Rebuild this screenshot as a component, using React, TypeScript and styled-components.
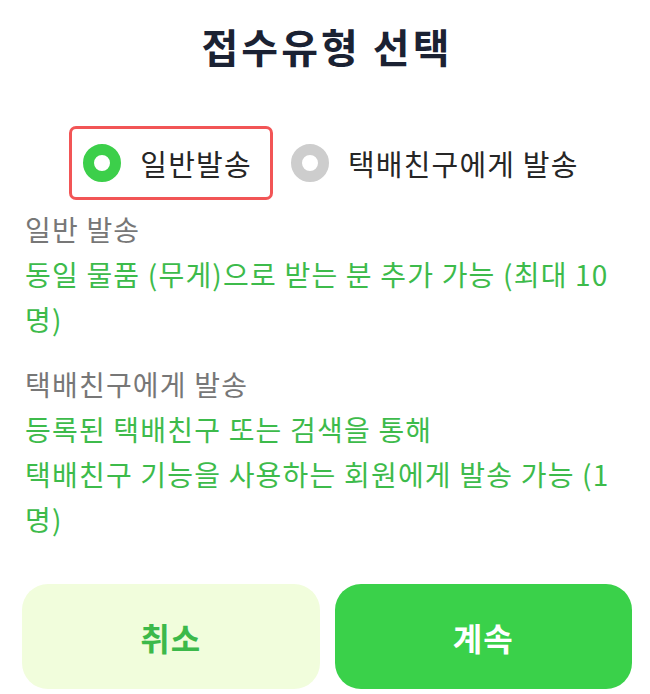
import React, { FC, useState } from 'react';
import styled, { createGlobalStyle } from 'styled-components';

const GlobalStyle = createGlobalStyle`
  html, body {
    margin: 0;
    padding: 0;
    background: #ffffff;
  }
  body {
    font-family: 'Noto Sans CJK KR', 'Noto Sans', sans-serif;
  }
`;

const Sheet = styled.div`
  width: 650px;
  height: 694px;
  box-sizing: border-box;
  padding: 22px 18px 0 22px;
  display: flex;
  flex-direction: column;
`;

const Title = styled.h1`
  margin: 0;
  text-align: center;
  font-size: 40px;
  line-height: 48px;
  font-weight: 700;
  color: #1b2233;
  letter-spacing: 3px;
`;

const RadioRow = styled.div`
  display: flex;
  justify-content: center;
  gap: 4px;
  margin-top: 56px;
  padding-left: 15px;
`;

const Option = styled.button<{ $selected: boolean }>`
  display: flex;
  align-items: center;
  gap: 19px;
  height: 74px;
  box-sizing: border-box;
  padding: 0 18px 0 11px;
  border: 3px solid ${p => (p.$selected ? '#f25556' : 'transparent')};
  border-radius: 7px;
  background: none;
  font-family: inherit;
  cursor: pointer;
`;

const Dot = styled.span<{ $selected: boolean }>`
  width: 38px;
  height: 38px;
  box-sizing: border-box;
  border-radius: 50%;
  border: 11.5px solid ${p => (p.$selected ? '#3ccf4a' : '#cdcdcd')};
  background: #ffffff;
  flex-shrink: 0;
`;

const OptionLabel = styled.span`
  font-size: 29px;
  color: #262626;
  letter-spacing: 1.2px;
`;

const Section = styled.div<{ $gap?: number }>`
  margin-top: ${p => p.$gap ?? 0}px;
  padding: 0 10px 0 3px;
  font-size: 28px;
  line-height: 45px;
  letter-spacing: 1.2px;
`;

const SectionLabel = styled.div`
  color: #777777;
`;

const SectionBody = styled.div`
  color: #3dbb4b;
  white-space: pre-line;
`;

const Buttons = styled.div`
  margin-top: 42px;
  display: grid;
  grid-template-columns: 1fr 1fr;
  gap: 15px;
`;

const ActionButton = styled.button<{ $primary?: boolean }>`
  height: 105px;
  border: none;
  border-radius: 26px;
  font-family: inherit;
  font-size: 32px;
  font-weight: 600;
  letter-spacing: 1px;
  background: ${p => (p.$primary ? '#3ad14a' : '#f1fddc')};
  color: ${p => (p.$primary ? '#ffffff' : '#3cb94a')};
  cursor: pointer;
`;

const options = [
  { id: 'normal', label: '일반발송' },
  { id: 'friend', label: '택배친구에게 발송' },
];

const App: FC = () => {
  const [selected, setSelected] = useState('normal');

  return (
    <>
      <GlobalStyle />
      <Sheet>
        <Title>접수유형 선택</Title>
        <RadioRow>
          {options.map(o => (
            <Option
              key={o.id}
              type="button"
              $selected={selected === o.id}
              onClick={() => setSelected(o.id)}
            >
              <Dot $selected={selected === o.id} />
              <OptionLabel>{o.label}</OptionLabel>
            </Option>
          ))}
        </RadioRow>
        <Section $gap={7}>
          <SectionLabel>일반 발송</SectionLabel>
          <SectionBody>동일 물품 (무게)으로 받는 분 추가 가능 (최대 10명)</SectionBody>
        </Section>
        <Section $gap={20}>
          <SectionLabel>택배친구에게 발송</SectionLabel>
          <SectionBody>
            {'등록된 택배친구 또는 검색을 통해\n택배친구 기능을 사용하는 회원에게 발송 가능 (1명)'}
          </SectionBody>
        </Section>
        <Buttons>
          <ActionButton type="button">취소</ActionButton>
          <ActionButton type="button" $primary>
            계속
          </ActionButton>
        </Buttons>
      </Sheet>
    </>
  );
};

export default App;
